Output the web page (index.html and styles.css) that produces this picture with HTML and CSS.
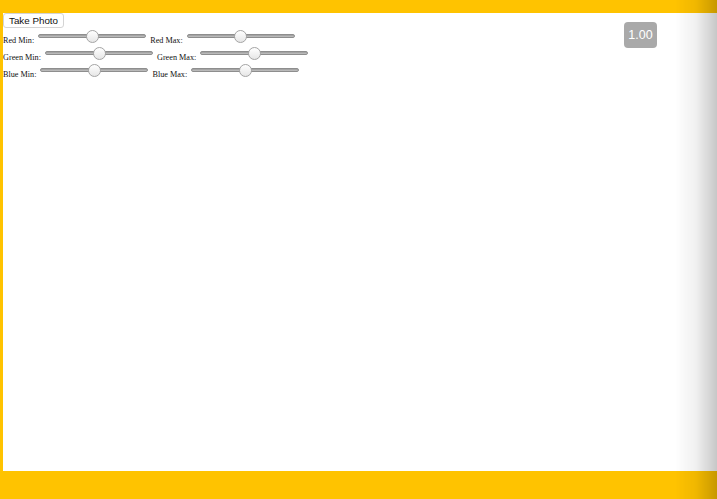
FILE: index.html
```html
<!DOCTYPE html>
<html>
<head>
<meta charset="utf-8">
<link rel="stylesheet" href="styles.css">
</head>
<body>
<div class="panel">
  <div class="controls">
    <button class="photo-btn">Take Photo</button>
    <div class="row">
      <span class="lbl">Red Min:</span><input class="slider" type="range" min="0" max="255" value="128">
      <span class="lbl">Red Max:</span><input class="slider" type="range" min="0" max="255" value="128">
    </div>
    <div class="row">
      <span class="lbl">Green Min:</span><input class="slider" type="range" min="0" max="255" value="128">
      <span class="lbl">Green Max:</span><input class="slider" type="range" min="0" max="255" value="128">
    </div>
    <div class="row">
      <span class="lbl">Blue Min:</span><input class="slider" type="range" min="0" max="255" value="128">
      <span class="lbl">Blue Max:</span><input class="slider" type="range" min="0" max="255" value="128">
    </div>
  </div>
  <div class="badge">1.00</div>
</div>
<div class="edge-shade"></div>
</body>
</html>
```
FILE: styles.css
```css
html, body {
  margin: 0;
  padding: 0;
  height: 100%;
  overflow: hidden;
}
body {
  background: #ffc300;
  font-family: "Liberation Serif", "Times New Roman", serif;
}
.panel {
  margin: 13px 0 0 3px;
  width: 714px;
  height: 458px;
  background: #ffffff;
  display: flex;
  align-items: flex-start;
}
.controls {
  display: flex;
  flex-direction: column;
  align-items: flex-start;
}
.photo-btn {
  font-family: "Liberation Sans", Arial, sans-serif;
  font-size: 9.8px;
  color: #111;
  background: #fff;
  border: 1px solid #d4d4d4;
  border-radius: 3px;
  width: 61px;
  height: 15px;
  padding: 0;
  margin: 0;
  line-height: 13px;
}
.row {
  display: flex;
  align-items: flex-end;
  height: 17px;
}
.lbl {
  font-size: 8.2px;
  line-height: 8px;
  color: #111;
  padding-bottom: 0;
}
.slider {
  -webkit-appearance: none;
  appearance: none;
  width: 108px;
  height: 13px;
  margin: 0 4px 3px 4px;
  padding: 0;
  background: transparent;
}
.slider::-webkit-slider-runnable-track {
  height: 4px;
  border-radius: 2px;
  background: linear-gradient(#9a9a9a, #c4c4c4);
  border: 1px solid #8e8e8e;
  box-sizing: border-box;
}
.slider::-webkit-slider-thumb {
  -webkit-appearance: none;
  appearance: none;
  width: 13px;
  height: 13px;
  border-radius: 50%;
  background: linear-gradient(#ffffff, #e6e6e6);
  border: 1px solid #a4a4a4;
  box-sizing: border-box;
  margin-top: -5px;
}
.badge {
  margin: 9px 60px 0 auto;
  width: 33px;
  height: 26px;
  border-radius: 4px;
  background: #a9a9a9;
  color: #ffffff;
  font-family: "Liberation Sans", Arial, sans-serif;
  font-size: 12.5px;
  line-height: 26px;
  text-align: center;
}
.edge-shade {
  position: fixed;
  top: 0;
  right: 0;
  bottom: 0;
  width: 42px;
  background: linear-gradient(to right, rgba(0,0,0,0), rgba(0,0,0,0.06) 50%, rgba(0,0,0,0.22));
  pointer-events: none;
}
```
